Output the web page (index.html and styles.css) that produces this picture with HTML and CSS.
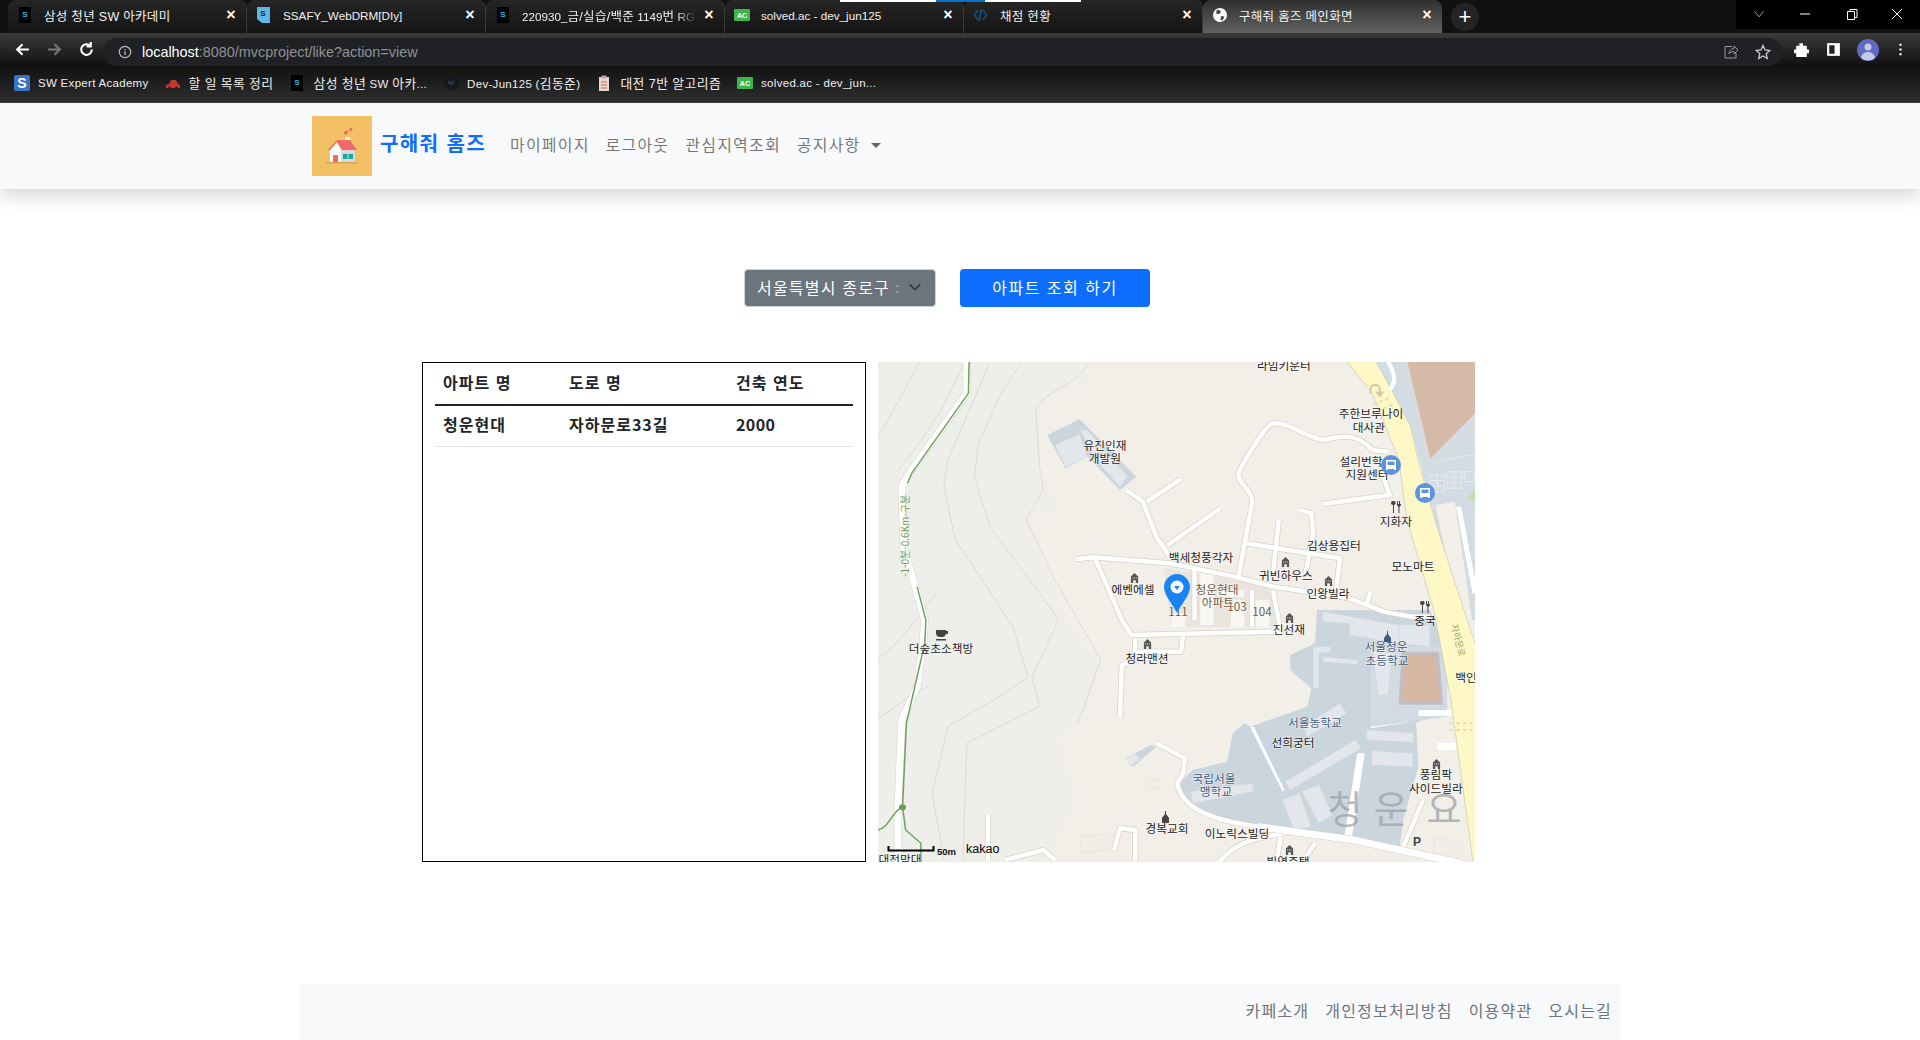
FILE: index.html
```html
<!DOCTYPE html>
<html lang="ko">
<head>
    <meta charset="UTF-8">
    <title>구해줘 홈즈 메인화면</title>
    <link rel="stylesheet" href="styles.css">
</head>
<body>
    <svg class="defs" width="0" height="0">
        <symbol id="fav-s" viewBox="0 0 16 16"><rect x="2" width="12" height="16" fill="#000"/><text x="8" y="10" class="fav-s-text">S</text></symbol>
        <symbol id="fav-ac" viewBox="0 0 16 16"><rect y="2" width="16" height="12" rx="1" fill="#3cb54a"/><text x="8" y="11" class="fav-ac-text">AC</text></symbol>
        <symbol id="ico-house" viewBox="0 0 10 12"><path d="M1 12V5l4-4 4 4v7H6.500V9h-3v3z" fill="#555"/><path d="M2.500 6h1v1h-1zM4.500 6h1v1h-1zM6.500 6h1v1h-1z" fill="#f2efe9"/></symbol>
        <symbol id="ico-food" viewBox="0 0 12 12"><path d="M3 0a2 2 0 0 1 1 4v8H3V4a2 2 0 0 1 0-4zM7 0h1v3h1V0h1v3h1V0h0v4L9.500 6v6h-1V6L7 4z" fill="#444"/></symbol>
        <symbol id="ico-bus" viewBox="0 0 20 20"><circle cx="10" cy="10" r="10" fill="#5d94db"/><path d="M5 5h10v10h-2v-1H7v1H5zM6.500 6.500v3.500h7V6.500z" fill="#fff"/></symbol>
    </svg>

    <!-- browser chrome -->
    <div class="tabstrip">
        <div class="tab"><svg class="fav"><use href="#fav-s"/></svg><span class="tab-title"><span class="ko">삼성 청년 SW 아카데미</span></span><span class="tab-x">×</span></div>
        <div class="tab"><svg class="fav fav-blue" viewBox="0 0 16 16"><path d="M1 0h13v16H6l-5-4z" fill="#5bb8e8"/><text x="7" y="9" class="fav-s-text fav-dark">S</text></svg><span class="tab-title">SSAFY_WebDRM[DIy]</span><span class="tab-x">×</span></div>
        <div class="tab"><svg class="fav"><use href="#fav-s"/></svg><span class="tab-title tab-fade">220930_<span class="ko">금/실습/백준</span> 1149<span class="ko">번</span> RGB<span class="ko">거리</span></span><span class="tab-x">×</span></div>
        <div class="tab"><svg class="fav"><use href="#fav-ac"/></svg><span class="tab-title">solved.ac - dev_jun125</span><span class="tab-x">×</span></div>
        <div class="tab"><svg class="fav" viewBox="0 0 16 16"><path d="M5 3 1.500 8 5 13M10 3l3.500 5L10 13M8.500 2 6 14" fill="none" stroke="#0f5d9c" stroke-width="1.300"/></svg><span class="tab-title"><span class="ko">채점 현황</span></span><span class="tab-x">×</span></div>
        <div class="tab tab-active"><svg class="fav" viewBox="0 0 16 16"><circle cx="8" cy="8" r="7" fill="#fff"/><path d="M5 2.500 9 4 7.500 7 4 6.500zM9 9l3.500.5-2 4L8.500 13z" fill="#444"/></svg><span class="tab-title"><span class="ko">구해줘 홈즈 메인화면</span></span><span class="tab-x">×</span></div>
        <div class="tab-new">+</div>
        <div class="win-controls">
            <svg class="win-btn" viewBox="0 0 50 29"><path d="M20 11l5 6 5-6" fill="none" stroke="#aaa"/></svg>
            <svg class="win-btn" viewBox="0 0 46 29"><path d="M18 14h10" stroke="#fff"/></svg>
            <svg class="win-btn" viewBox="0 0 46 29"><path d="M19.500 11.500h7v8h-7zM22 11.500v-2h7v8h-2.500" fill="none" stroke="#fff"/></svg>
            <svg class="win-btn" viewBox="0 0 46 29"><path d="M18 9l10 10M28 9 18 19" stroke="#fff"/></svg>
        </div>
        <span class="load-bar"></span>
    </div>
    <div class="toolbar">
        <svg class="tool-ico" viewBox="0 0 16 16"><path d="M14 8H3M8 3 3 8l5 5" fill="none" stroke="#fff" stroke-width="2"/></svg>
        <svg class="tool-ico" viewBox="0 0 16 16"><path d="M2 8h11M8 3l5 5-5 5" fill="none" stroke="#777" stroke-width="2"/></svg>
        <svg class="tool-ico" viewBox="0 0 16 16"><path d="M13 8a5 5 0 1 1-1.500-3.500M12 1v4H8" fill="none" stroke="#fff" stroke-width="2"/></svg>
        <div class="omnibox">
            <svg class="info-ico" viewBox="0 0 16 16"><circle cx="8" cy="8" r="6.500" fill="none" stroke="#bbb" stroke-width="1.300"/><path d="M8 7v4.500M8 4.500v1.300" stroke="#bbb" stroke-width="1.500"/></svg>
            <span class="url"><b>localhost</b>:8080/mvcproject/like?action=view</span>
            <span class="omni-end">
                <svg class="omni-ico" viewBox="0 0 16 16"><path d="M9 2.500h-7v11.500h11v-5M6 10c0-4 3-5.500 5-5.500V2l4 4-4 4V7.500c-2 0-4 .5-5 2.500" fill="none" stroke="#999"/></svg>
                <svg class="omni-ico" viewBox="0 0 16 16"><path d="m8 1.500 2 4.500 4.800.500-3.600 3.200 1 4.800L8 12l-4.200 2.500 1-4.800L1.200 6.500 6 6z" fill="none" stroke="#ccc" stroke-width="1.300"/></svg>
            </span>
        </div>
        <svg class="tool-ico" viewBox="0 0 16 16"><path d="M6 2h3.500v2.500H13V8h2v3.500h-2V15H3v-3.500H1V8h2V4.500h3z" fill="#fff"/></svg>
        <svg class="tool-ico" viewBox="0 0 16 16"><path d="M2 2h12v12H2z" fill="#fff"/><path d="M4 4h5v8H4z" fill="#222"/></svg>
        <svg class="tool-ico avatar" viewBox="0 0 22 22"><circle cx="11" cy="11" r="11" fill="#5c6bc0"/><circle cx="11" cy="8" r="3.500" fill="#c5cae9"/><path d="M4 19c1-5 4-6 7-6s6 1 7 6a11 11 0 0 1-14 0" fill="#c5cae9"/></svg>
        <svg class="tool-ico tool-last" viewBox="0 0 16 16"><path d="M8 2.500v2M8 7v2M8 11.500v2" stroke="#fff" stroke-width="2"/></svg>
    </div>
    <div class="bookmarks">
        <span class="bm"><svg class="fav" viewBox="0 0 16 16"><rect width="16" height="16" rx="2" fill="#3a74c9"/><text x="8" y="13" class="fav-sw">S</text></svg><span>SW Expert Academy</span></span>
        <span class="bm"><svg class="fav" viewBox="0 0 16 16"><path d="M1 13v-3l3-1 2-4h5l2 4 2 1v3z" fill="#c0392b"/><circle cx="4.500" cy="13" r="1.500" fill="#222"/><circle cx="11.500" cy="13" r="1.500" fill="#222"/></svg><span class="ko">할 일 목록 정리</span></span>
        <span class="bm"><svg class="fav"><use href="#fav-s"/></svg><span><span class="ko">삼성 청년</span> SW <span class="ko">아카</span>...</span></span>
        <span class="bm"><svg class="fav" viewBox="0 0 16 16"><circle cx="8" cy="8" r="7.500" fill="#15181c"/><path d="M5 5l1.500 1h3L11 5v3l-1 2H6L5 8z" fill="#2c3138"/></svg><span>Dev-Jun125 (<span class="ko">김동준</span>)</span></span>
        <span class="bm"><svg class="fav" viewBox="0 0 16 16"><rect x="3" y="2" width="10" height="14" fill="#e8d9c8"/><rect x="5.500" y=".5" width="5" height="3" fill="#c9a"/><path d="M5 7h6M5 10h6M5 13h6" stroke="#c66"/></svg><span class="ko">대전 7반 알고리즘</span></span>
        <span class="bm"><svg class="fav"><use href="#fav-ac"/></svg><span>solved.ac - dev_jun...</span></span>
    </div>

    <!-- site nav -->
    <nav class="navbar">
        <svg class="logo" viewBox="0 0 60 60">
            <rect width="60" height="60" fill="#f4c065"/>
            <rect x="14" y="46" width="32" height="1.500" fill="#d9a24f"/>
            <rect x="33" y="21" width="5" height="9" fill="#eee"/>
            <path d="M29 34h14v12H29z" fill="#d8d8d6"/>
            <path d="M18 46V34l7-8 4 8v12z" fill="#fff"/>
            <path d="M21 39h5v7h-5z" fill="#ef6a63"/>
            <path d="M31 38h4.500v5H31zM36.500 38H41v5h-4.500z" fill="#17a9a4"/>
            <path d="M16 34l9-10h13l7 10H30l-5-8-7 8z" fill="#f2686a"/>
            <path d="M33 15.500c1-1.500 3-1 3 .5s-2 3-2 3-2-.5-2-2 .5-1.500 1-1.500zM38 12.500c.5-1 2.500-1 2.500.5s-2 2.500-2 2.500-1.500-1-1.500-2 .5-1 1-1z" fill="#f2686a"/>
        </svg>
        <a class="brand">구해줘 홈즈</a>
        <a class="nav-link">마이페이지</a>
        <a class="nav-link">로그아웃</a>
        <a class="nav-link">관심지역조회</a>
        <a class="nav-link nav-drop">공지사항</a>
    </nav>

    <main class="content">
        <div class="search-row">
            <div class="gu-select">
                <span class="gu-value">서울특별시 종로구 <span class="gu-rest">:</span></span>
                <svg class="gu-arrow" viewBox="0 0 16 16"><path d="m2 5 6 6 6-6" fill="none" stroke="#343a40" stroke-width="2"/></svg>
            </div>
            <button class="btn-search">아파트 조회 하기</button>
        </div>

        <div class="result-row">
            <div class="apt-box">
                <table class="apt-table">
                    <thead>
                        <tr><th class="col-name">아파트 명</th><th class="col-road">도로 명</th><th>건축 연도</th></tr>
                    </thead>
                    <tbody>
                        <tr><td>청운현대</td><td>자하문로33길</td><td class="col-year">2000</td></tr>
                    </tbody>
                </table>
            </div>

            <svg class="map" viewBox="0 0 597 500">
                <defs>
                    <g id="minor-roads">
                        <path d="M1170 432 1345 405 1325 340M1340 275 1300 270C1260 222 1230 225 1170 240 1130 235 1080 185 1040 190 1020 195 960 310 950 340 945 370 990 390 985 430L950 650"/>
                        <path d="M525 598 570 592 770 610 940 650 1040 680 1240 715 1330 755 1400 770 1450 770"/>
                        <path d="M655 390 700 425 735 530 770 590M710 425 798 358M765 555 902 445"/>
                        <path d="M970 550 1215 595 1205 690M1055 480 1040 640M1110 450 1140 460 1145 520 1125 640M1295 695 1285 730"/>
                        <path d="M575 595 645 780 670 825 1060 815M680 835V875H800L805 825M670 905 645 915 640 1075"/>
                        <path d="M735 1150 810 1195 805 1240 790 1270C800 1340 870 1380 1000 1400M680 1500V1410L640 1405 625 1470M295 1365V1500M340 1500 440 1470 470 1500"/>
                        <path d="M835 625V780M985 690V800M1040 690 1060 815M1100 1415C990 1430 940 1450 900 1505M1060 1430 1050 1500M1150 1450 1120 1500M1432 1320 1377 1470"/>
                    </g>
                </defs>
                <g transform="translate(-3 -2) scale(.3827 .3333)">
                    <rect x="0" y="0" width="1580" height="1510" fill="#f2efe9"/>
                    <path class="hill" d="M0 0H550L555 70 450 110 430 320 480 450 400 480 500 780 590 920 560 1090 480 1120 530 1340 430 1500H0z"/>
                    <path class="hill-in" d="M0 0H380L270 250 260 350 340 620 420 820 500 1000 440 1060 250 1200 270 1500H0z"/>
                    <g class="contour">
                        <path d="M120 0C60 120 40 180 0 240M230 10C190 140 100 280 60 330M380 10 330 100 270 250 260 350 300 500 430 700 480 780 410 950 430 1040 240 1150 230 1500"/>
                        <path d="M300 10 190 300 180 380 210 540 280 660 360 800 400 950 340 1000 190 1100 150 1300 180 1500"/>
                        <path d="M555 10C540 70 440 90 420 150L430 320 440 390 395 480 470 660 590 900 530 1090M1 900C60 860 90 800 160 700M0 1080C60 1040 90 1000 140 980"/>
                    </g>

                    <path class="block-road" d="M1309 5H1580V780H1540L1463 480 1400 200z"/>
                    <path class="block-land" d="M1465 435 1515 425 1560 780H1525z"/>
                    <path class="green-spot" d="M1568 385V430L1550 410z"/>
                    <path class="playground" d="M1388 0H1580V150L1450 300z"/>
                    <g class="crosswalk">
                        <path d="M1450 345h38v50h-38zM1495 335h38v50h-38z"/>
                        <path d="M1450 362h38M1450 378h38M1495 352h38M1495 368h38M1469 345v50M1514 335v50"/>
                        <path d="M1450 325 1470 305 1580 280M1540 335h25v30h-25z"/>
                    </g>
                    <path class="road-white" d="M1525 440 1568 700"/>

                    <path class="block-grey" d="M450 225 535 178 683 350 640 390 555 290 498 325z"/>
                    <path class="block-light" d="M470 255 535 222 555 290 498 322zM537 210 555 210 660 350 640 380 570 290z"/>
                    <path class="block-apt" d="M755 625 1040 680 1060 800 775 800z"/>
                    <path class="block-white" d="M775 760H810V800H775zM850 640H885V795H850zM930 720H965V800H930zM995 720H1030V800H995zM900 690H965V710H900z"/>

                    <g transform="translate(0 750)">
                        <path class="block-grey" d="M1155 0H1450L1495 130V300L1414 339 1420 471 1382 621 1369 726 1100 665 900 625 810 580 795 520 830 480 920 455 935 370 965 340 980 350 1130 290 1140 235 1085 180V135L1150 100z"/>
                        <path class="block-lightgrey" d="M1295 110H1495V320L1295 350z"/>
                        <path class="block-light" d="M1170 5 1370 45V100L1240 75V40L1170 35zM1145 110H1190V125L1160 130V235H1145zM1170 140 1260 150V163L1170 155zM1370 45H1450V110L1370 100zM1300 120 1350 130 1340 255H1315z"/>
                        <path class="block-light" d="M1120 350 1215 280 1232 310 1130 380zM1072 515 1255 390 1270 415 1085 540zM1285 360 1407 370V397L1285 390zM1298 422 1405 430V470L1298 465zM825 545 985 520 990 545 830 580zM1065 570 1110 550 1140 650 1095 660zM1115 545 1160 525 1195 615 1160 640z"/>
                        <path class="playground-line" d="M1380 130H1470L1480 280H1372z"/>
                        <path class="ground-white" d="M980 350 1065 545 1070 540 990 350zM1295 350 1405 335 1295 355zM1420 300H1507V318H1420zM1470 398H1518V420H1470zM1260 430H1280L1245 690H1225z"/>
                        <path class="block-pale" d="M535 680 620 670V720L538 728zM715 510H740V535H715zM1460 680 1500 690 1540 720 1520 750H1465z"/>
                        <path class="block-grey" d="M655 445 720 405 735 410 675 470z"/>
                        <path class="block-light" d="M655 445 680 430 692 450 668 467z"/>
                    </g>

                    <path class="road-yellow" d="M1233 5 1300 100 1369 300 1390 480 1460 750 1505 1020 1563 1509H1580V850H1568L1510 650 1463 480 1419 300 1400 200 1350 90 1309 5z"/>
                    <g class="crosswalk-y">
                        <path d="M1300 135l45-22M1310 155l45-22M1320 175l45-22M1500 1090h60M1500 1110h60"/>
                    </g>
                    <path class="uturn" d="M1295 100V85a12 10 0 0 1 24 0v20M1310 95l9 12 9-12"/>
                    <use href="#minor-roads" class="road-case"/>
                    <use href="#minor-roads" class="road-fill"/>
                    <path class="road-white-wide" d="M1340 5C1360 40 1360 70 1345 90"/>
                    <path class="road-main-case" d="M1000 1400 1250 1440 1530 1510M240 5V100L90 340 70 380 75 560 130 780 125 850 110 980 70 1080 60 1340 60 1510"/>
                    <path class="road-main" d="M1000 1400 1250 1440 1530 1510M240 5V100L90 340 70 380 75 560 130 780 125 850 110 980 70 1080 60 1340 60 1510"/>
                    <path class="trail" d="M246 5 244 100 96 340 85 370M110 680 133 780 130 850 82 1090 72 1340 80 1410 120 1450 120 1510M72 1340C40 1360 40 1400 8 1410"/>
                    <circle cx="72" cy="1342" r="9" fill="#6b9b57"/>
                </g>

                <text class="trail-text" transform="translate(31 215) rotate(-90)">-1-0분-0.6Km-구분</text>

                <g class="lbl">
                    <text x="406" y="8">라임키운터</text>
                    <text x="493" y="56">주한브루나이</text><text x="491" y="70">대사관</text>
                    <text x="227" y="88">유진인재</text><text x="227" y="101">개발원</text>
                    <text x="483" y="104">설리번학</text><text x="489" y="117">지원센터</text>
                    <text x="518" y="164">지화자</text>
                    <text x="456" y="188">김상용집터</text>
                    <text x="535" y="209">모노마트</text>
                    <text x="323" y="200">백세청풍각자</text>
                    <text x="408" y="218">귀빈하우스</text>
                    <text x="255" y="232">에벤에셀</text>
                    <text x="450" y="236">인왕빌라</text>
                    <text x="547" y="263">중국</text>
                    <text x="411" y="272">진선재</text>
                    <text x="63" y="291">더숲초소책방</text>
                    <text x="269" y="301">청라맨션</text>
                    <text x="588" y="320">백인</text>
                    <text x="415" y="385">선희궁터</text>
                    <text x="558" y="417">풍림팍</text><text x="558" y="431">사이드빌라</text>
                    <text x="289" y="471">경복교회</text>
                    <text x="359" y="476">이노릭스빌딩</text>
                    <text x="22" y="502">대전맏대</text>
                    <text x="410" y="504">빌연주택</text>
                </g>
                <g class="lbl lbl-apt">
                    <text x="339" y="232">청운현대</text><text x="340" y="245">아파트</text>
                    <text x="300" y="254">111</text><text x="359" y="249">103</text><text x="384" y="254">104</text>
                </g>
                <g class="lbl lbl-school">
                    <text x="508" y="289">서울청운</text><text x="509" y="303">초등학교</text>
                    <text x="437" y="365">서울농학교</text>
                    <text x="336" y="421">국립서울</text><text x="338" y="434">맹학교</text>
                </g>
                <g class="lbl-big"><text x="467" y="461">청</text><text x="513" y="461">운</text><text x="566" y="461">요</text></g>
                <text class="lbl-road" transform="translate(573 263) rotate(76)">자하문로</text>

                <use href="#ico-house" x="252" y="210" width="9" height="11"/>
                <use href="#ico-house" x="403" y="194" width="9" height="11"/>
                <use href="#ico-house" x="446" y="213" width="9" height="11"/>
                <use href="#ico-house" x="407" y="250" width="9" height="11"/>
                <use href="#ico-house" x="265" y="276" width="9" height="11"/>
                <use href="#ico-house" x="554" y="396" width="9" height="11"/>
                <use href="#ico-house" x="407" y="482" width="9" height="11"/>
                <use href="#ico-food" x="512" y="139" width="12" height="12"/>
                <use href="#ico-food" x="541" y="239" width="12" height="12"/>
                <use href="#ico-bus" x="503" y="93" width="20" height="20"/>
                <use href="#ico-bus" x="537" y="121" width="20" height="20"/>

                <!-- cup -->
                <path d="M58 268h10v4a4 4 0 0 1-3 3h-4a4 4 0 0 1-3-3zM68 269h2v3h-2zM58 277h10v1.500H58z" fill="#444"/>
                <!-- churches -->
                <path d="M506 276l3-4v-3h1v3l3 4v4h-7z" fill="#3d5a80"/>
                <path d="M284 456l3-4v-3h1v3l3 4v5h-7z" fill="#444"/>
                <text class="lbl-p" x="539" y="484">P</text>

                <!-- marker -->
                <path class="pin" d="M299 212c7 0 13 6 13 13 0 9-9 17-13 26-4-9-13-17-13-26 0-7 6-13 13-13z"/>
                <circle cx="299" cy="225" r="6.500" fill="#fff"/>
                <path d="m296 224 6 0-3 4z" fill="#1a84f5"/>

                <!-- scale -->
                <path d="M10.500 484v4.500h45V484" fill="none" stroke="#000" stroke-width="2"/>
                <text class="scale-text" x="59" y="493">50m</text>
                <text class="kakao" x="88" y="491">kakao</text>
            </svg>
        </div>
    </main>

    <footer class="footer">
        <a class="foot-link">카페소개</a>
        <a class="foot-link">개인정보처리방침</a>
        <a class="foot-link">이용약관</a>
        <a class="foot-link">오시는길</a>
    </footer>
</body>
</html>
```

FILE: styles.css
```css
body {
    margin: 0;
    height: 1040px;
    overflow: hidden;
    background: #fff;
    font-family: "Noto Sans CJK KR", "Noto Sans", sans-serif;
    color: #212529;
}

.defs {
    position: absolute;
}

/* browser chrome */
.tabstrip {
    position: relative;
    display: flex;
    height: 33px;
    padding-left: 8px;
    background: #111;
}

.tab {
    display: flex;
    align-items: center;
    width: 239px;
    height: 33px;
    box-sizing: border-box;
    padding: 0 7px 3px 9px;
    border-radius: 8px 8px 0 0;
    border-right: 1px solid #3a3a3a;
    background: linear-gradient(#262626, #141414);
    color: #f1f1f1;
    font: 11.700px "Liberation Sans", "Noto Sans CJK KR", sans-serif;
}

.tab .ko {
    font-size: 12.500px;
    letter-spacing: .3px;
}

.tab-active {
    border: 0;
    background: linear-gradient(#2f2f2f, #626262);
}

.fav {
    flex: none;
    width: 16px;
    height: 16px;
    margin-right: 11px;
}

.fav-s-text {
    font: bold 8px "Liberation Sans", sans-serif;
    fill: #2bb5e0;
    text-anchor: middle;
}

.fav-dark {
    fill: #123;
}

.fav-ac-text {
    font: bold 7px "Liberation Sans", sans-serif;
    fill: #fff;
    text-anchor: middle;
}

.fav-sw {
    font: bold 14px "Liberation Sans", sans-serif;
    fill: #fff;
    text-anchor: middle;
}

.tab-title {
    flex: 1;
    overflow: hidden;
    white-space: nowrap;
}

.tab-fade {
    -webkit-mask-image: linear-gradient(90deg, #000 88%, transparent);
    mask-image: linear-gradient(90deg, #000 88%, transparent);
}

.tab-x {
    flex: none;
    width: 16px;
    margin-left: 4px;
    font-size: 16px;
    font-weight: 700;
    line-height: 16px;
    text-align: center;
    color: #fff;
}

.tab-new {
    width: 28px;
    height: 28px;
    margin: 3px 0 0 9px;
    border-radius: 50%;
    background: #242424;
    color: #fff;
    font: 22px/27px "Liberation Sans", sans-serif;
    text-align: center;
}

.win-controls {
    display: flex;
    height: 29px;
    margin-left: auto;
    background: #000;
}

.win-btn {
    width: 46px;
    height: 29px;
}

.load-bar {
    position: absolute;
    top: 0;
    left: 840px;
    width: 241px;
    height: 2px;
    background: linear-gradient(90deg, #fff 40%, #0a72c8 40%, #0a72c8 60%, #fff 60%);
}

.toolbar {
    display: flex;
    align-items: center;
    height: 33px;
    padding: 0 11px 0 14px;
    box-sizing: border-box;
    background: linear-gradient(#3a3a3a, #111);
}

.tool-ico {
    flex: none;
    width: 17px;
    height: 17px;
    margin-right: 15px;
}

.tool-last {
    margin-right: 0;
}

.omnibox {
    display: flex;
    flex: 1;
    align-items: center;
    height: 28px;
    margin: 5px 11px 0 -7px;
    padding: 0 11px 0 12px;
    border-radius: 14px;
    background: #202124;
}

.info-ico {
    width: 14px;
    height: 14px;
    margin: 0 10px 0 3px;
}

.url {
    color: #8f9297;
    font: 14.400px "Liberation Sans", sans-serif;
}

.url b {
    color: #fff;
    font-weight: 400;
}

.omni-end {
    display: flex;
    gap: 16px;
    margin-left: auto;
}

.omni-ico {
    width: 16px;
    height: 16px;
}

.avatar {
    width: 22px;
    height: 22px;
    margin-right: 13px;
}

.bookmarks {
    display: flex;
    align-items: center;
    gap: 16px;
    height: 37px;
    padding: 0 0 3px 14px;
    background: linear-gradient(#111, #2e2e2e);
    border-bottom: 1px solid #444;
    box-sizing: border-box;
    color: #eee;
    font: 11.500px "Liberation Sans", "Noto Sans CJK KR", sans-serif;
    letter-spacing: .3px;
}

.bookmarks .ko {
    font-size: 12.800px;
    letter-spacing: .4px;
}

.bm {
    display: flex;
    align-items: center;
    white-space: nowrap;
}

.bm .fav {
    margin-right: 8px;
}

/* site nav */
.navbar {
    display: flex;
    align-items: center;
    height: 86px;
    padding-left: 312px;
    background: #f8f9fa;
    box-shadow: 0 8px 16px rgba(0, 0, 0, .15);
}

.logo {
    width: 60px;
    height: 60px;
    margin-right: 8px;
}

.brand {
    margin-right: 24px;
    margin-bottom: 8px;
    color: #0d6efd;
    font-size: 20px;
    font-weight: 700;
    letter-spacing: 1.400px;
}

.nav-link {
    margin-right: 16px;
    margin-bottom: 4px;
    color: rgba(0, 0, 0, .55);
    font-size: 16px;
    letter-spacing: 1.200px;
}

.nav-drop::after {
    content: "";
    display: inline-block;
    margin-left: 10px;
    vertical-align: 3px;
    border-top: 5px solid #666;
    border-left: 5px solid transparent;
    border-right: 5px solid transparent;
}

/* main */
.content {
    margin-left: 422px;
    width: 1053px;
}

.search-row {
    display: flex;
    gap: 24px;
    margin: 80px 0 55px 322px;
}

.gu-select {
    display: flex;
    align-items: center;
    justify-content: space-between;
    width: 192px;
    height: 38px;
    box-sizing: border-box;
    padding: 0 13px 2px 12px;
    border: 1px solid #ced4da;
    border-radius: 4px;
    background: #6c757d;
    color: #fff;
    font-size: 16px;
    letter-spacing: 1.200px;
}

.gu-value {
    white-space: nowrap;
}

.gu-rest {
    opacity: .6;
    font-size: 12px;
}

.gu-arrow {
    width: 14px;
    height: 14px;
}

.btn-search {
    width: 190px;
    height: 38px;
    padding: 0 0 2px;
    border: 0;
    border-radius: 4px;
    background: #0d6efd;
    color: #fff;
    font: 16px "Noto Sans CJK KR", sans-serif;
    letter-spacing: 1.500px;
}

.result-row {
    display: flex;
    gap: 12px;
}

.apt-box {
    width: 444px;
    height: 500px;
    box-sizing: border-box;
    padding: 0 12px;
    border: 1px solid #000;
}

.apt-table {
    width: 100%;
    border-collapse: collapse;
    font-size: 16px;
    font-weight: 600;
    letter-spacing: 1px;
}

.apt-table th,
.apt-table td {
    text-align: left;
    font-weight: 600;
    line-height: 24px;
}

.apt-table th {
    padding: 7px 8px 10px;
    border-bottom: 2px solid #212529;
}

.apt-table td {
    padding: 6px 8px 10px;
    border-bottom: 1px solid #dee2e6;
}

.apt-table .col-year {
    letter-spacing: .4px;
}

.col-name {
    width: 110px;
}

.col-road {
    width: 151px;
}

/* map */
.map {
    display: block;
    width: 597px;
    height: 500px;
    background: #f2efe9;
}

.map path {
    vector-effect: non-scaling-stroke;
}

.hill {
    fill: #f0eee8;
}

.hill-in {
    fill: #eeeeea;
}

.contour {
    fill: none;
    stroke: #dcdcd6;
    stroke-width: 1;
}

.block-grey {
    fill: #cad5de;
}

.block-lightgrey {
    fill: #d3dbe2;
}

.block-road {
    fill: #d3dce3;
}

.block-land {
    fill: #f2efe9;
}

.block-light {
    fill: #e3e7ec;
    stroke: #d3d8dd;
    stroke-width: .5;
}

.block-pale {
    fill: #f0eee6;
    stroke: #e0ddd5;
    stroke-width: .5;
}

.block-apt {
    fill: #e9e5dd;
}

.block-white {
    fill: #f8f7f3;
}

.ground-white {
    fill: #fff;
}

.green-spot {
    fill: #c5dfb0;
}

.playground {
    fill: #d5baa8;
    stroke: #e2d8dc;
    stroke-width: 1.500;
}

.playground-line {
    fill: #d5b7a2;
    stroke: #bfbfc5;
    stroke-width: 3;
}

.crosswalk {
    fill: none;
    stroke: #e6eaee;
    stroke-width: 1;
}

.road-yellow {
    fill: #fdf8c6;
    stroke: #b9b8a8;
    stroke-width: .5;
}

.crosswalk-y {
    fill: none;
    stroke: #e4e0b0;
    stroke-width: 2;
    stroke-dasharray: 4 3;
}

.uturn {
    fill: none;
    stroke: #cfc9a8;
    stroke-width: 2;
}

.road-white {
    fill: none;
    stroke: #fff;
    stroke-width: 5;
}

.road-white-wide {
    fill: none;
    stroke: #fff;
    stroke-width: 4;
}

.road-case,
.road-fill {
    fill: none;
    stroke-linejoin: round;
}

.road-case {
    stroke: #d6d2ca;
    stroke-width: 6;
}

.road-fill {
    stroke: #fff;
    stroke-width: 4.500;
}

.road-main-case,
.road-main {
    fill: none;
    stroke-linejoin: round;
}

.road-main-case {
    stroke: #d6d2ca;
    stroke-width: 8;
}

.road-main {
    stroke: #fff;
    stroke-width: 7;
}

.trail {
    fill: none;
    stroke: #71a05d;
    stroke-width: 1.500;
}

.trail-text {
    font-size: 10px;
    fill: #6f9e5a;
}

.lbl text {
    font-size: 11.700px;
    fill: #222;
    text-anchor: middle;
    paint-order: stroke;
    stroke: rgba(255, 255, 255, .5);
    stroke-width: 1.500px;
}

.lbl-apt text {
    fill: #6e5b46;
}

.lbl-school text {
    fill: #3f5a78;
}

.lbl-big text {
    font-size: 38px;
    fill: #9da4aa;
    fill-opacity: .75;
    text-anchor: middle;
}

.lbl-road {
    font-size: 9px;
    fill: #a5a465;
}

.lbl-p {
    font: bold 12px "Liberation Sans", sans-serif;
    fill: #444;
    text-anchor: middle;
}

.pin {
    fill: #1a84f5;
}

.scale-text {
    font: bold 9.500px "Liberation Sans", sans-serif;
    fill: #111;
}

.kakao {
    font: 12.500px "Liberation Sans", sans-serif;
    fill: #000;
}

/* footer */
.footer {
    display: flex;
    justify-content: flex-end;
    align-items: center;
    gap: 16px;
    width: 1320px;
    height: 56px;
    box-sizing: border-box;
    margin: 122px 0 0 300px;
    padding: 0 8px 4px 0;
    background: #f8f9fa;
}

.foot-link {
    color: #6c757d;
    font-size: 16px;
    letter-spacing: 1.200px;
}
```
